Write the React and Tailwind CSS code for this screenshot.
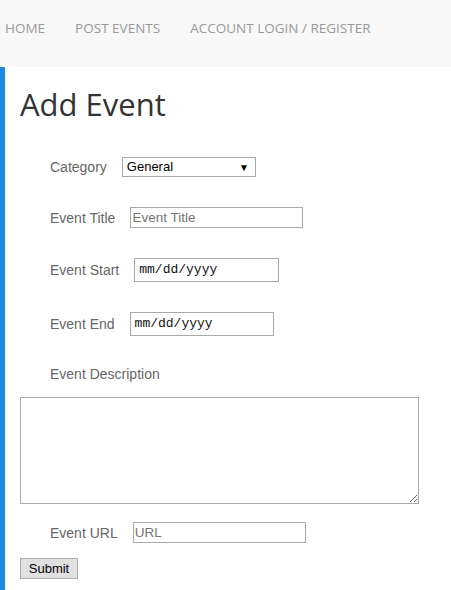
import React from 'react';

const navItems = ['HOME', 'POST EVENTS', 'ACCOUNT LOGIN / REGISTER'];

function Row({ label, children, className = '' }) {
  return (
    <div className={`flex items-center gap-[15px] pl-[30px] ${className}`}>
      <label className="text-[14px] text-[#666] leading-none">{label}</label>
      {children}
    </div>
  );
}

function DateBox({ width }) {
  return (
    <div
      className={`h-6 ${width} border border-[#a9a9a9] bg-white flex items-center pl-[4px] text-[13px] text-[#111]`}
      style={{ fontFamily: '"Liberation Mono", monospace' }}
    >
      mm/dd/yyyy
    </div>
  );
}

export default function App() {
  return (
    <div className="min-h-[590px] bg-white" style={{ fontFamily: 'Arial, "Liberation Sans", sans-serif' }}>
      <nav className="h-[67px] bg-[#f8f8f8] flex items-start pt-[18px] pl-[5px] gap-[30px]">
        {navItems.map((item) => (
          <a key={item} href="#" className="text-[13.5px] leading-[20px] text-[#999]" style={{ fontFamily: '"Open Sans", sans-serif' }}>
            {item}
          </a>
        ))}
      </nav>

      <main className="border-l-[5px] border-[#1e88e5] pl-[15px] min-h-[523px]">
        <h1 className="pt-[17px] text-[31px] leading-[40px] text-[#333]" style={{ fontFamily: '"Open Sans", sans-serif' }}>
          Add Event
        </h1>

        <Row label="Category" className="mt-[33px]">
          <div className="relative w-[134px] h-5 border border-[#a9a9a9] bg-white flex items-center pl-[4px] text-[13px] text-black">
            General
            <span className="absolute right-[6px] top-[2px] text-[10px]">▼</span>
          </div>
        </Row>

        <Row label="Event Title" className="mt-[30px]">
          <input
            placeholder="Event Title"
            className="w-[173px] h-[21px] border border-[#a9a9a9] px-[1px] text-[13.5px] placeholder:text-[#757575] outline-none"
          />
        </Row>

        <Row label="Event Start" className="mt-[30px]">
          <DateBox width="w-[145px]" />
        </Row>

        <Row label="Event End" className="mt-[30px]">
          <DateBox width="w-[144px]" />
        </Row>

        <div className="mt-[30px] pl-[30px] h-4 flex items-center text-[14px] text-[#666]">Event Description</div>

        <textarea className="block mt-[15px] w-[399px] h-[107px] border border-[#a9a9a9] outline-none" />

        <Row label="Event URL" className="mt-[18px]">
          <input
            placeholder="URL"
            className="w-[173px] h-[21px] border border-[#a9a9a9] px-[1px] text-[13.5px] placeholder:text-[#757575] outline-none"
          />
        </Row>

        <button className="mt-[15px] w-[58px] h-[21px] border border-[#adadad] bg-[#e1e1e1] text-[13px] text-black">
          Submit
        </button>
      </main>
    </div>
  );
}
